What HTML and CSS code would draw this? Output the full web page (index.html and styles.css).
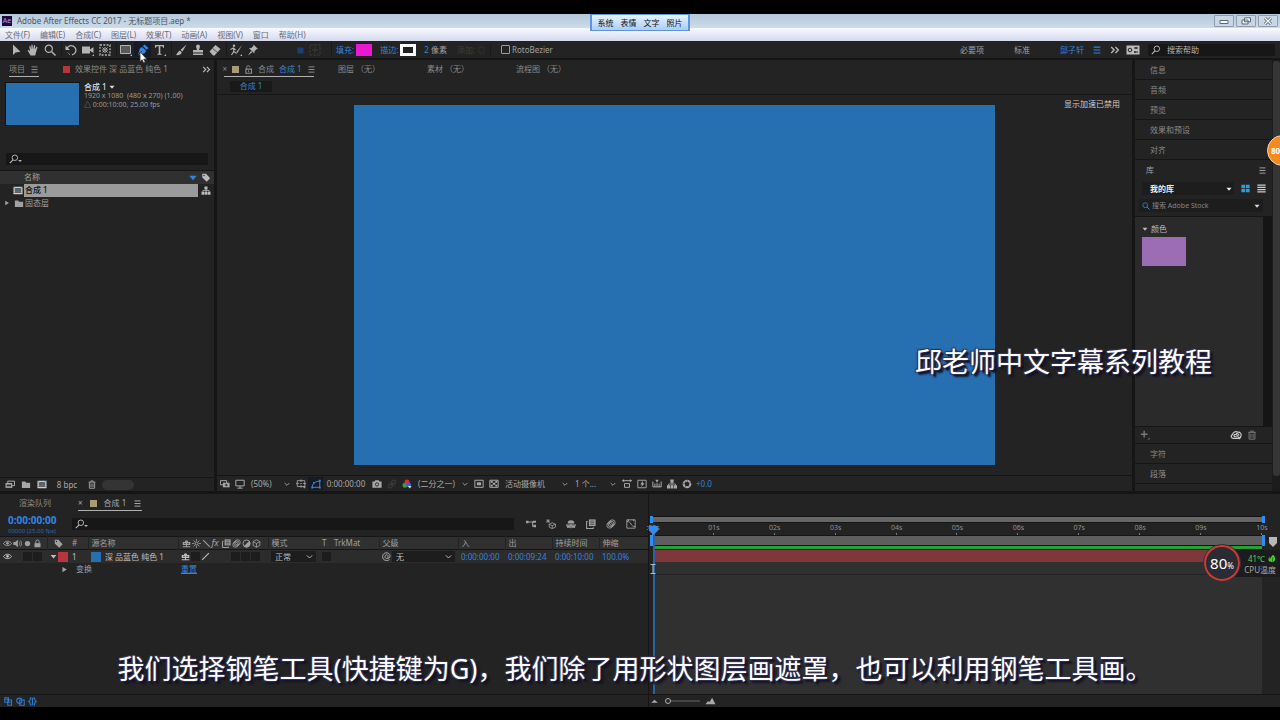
FILE: index.html
```html
<!DOCTYPE html>
<html lang="zh-CN">
<head>
<meta charset="utf-8">
<meta name="viewport" content="width=device-width, initial-scale=1">
<title>Adobe After Effects CC 2017 - 无标题项目.aep *</title>
<link rel="stylesheet" href="styles.css">
</head>
<body>
<svg class="defs" aria-hidden="true">
  <symbol id="arrow" viewBox="0 0 12 12"><path d="M3 0.5v10.5l2.6-2.6 4.9-.6z" fill="currentColor"/></symbol>
  <symbol id="hand" viewBox="0 0 12 12"><path d="M3.6 11.5 1 7.2C.3 6 1.4 5.5 2.1 6.3l1 1L2.3 2.6c-.1-.9 1-1.1 1.2-.2l.8 3 .1-4.3c0-.9 1.2-.9 1.2 0l.4 4.2 1-3.9c.2-.8 1.3-.6 1.2.3L7.700 5.800l1.5-2.700c.5-.8 1.500-.200 1.200.6L9 8.300l-.8 3.200z" fill="currentColor"/></symbol>
  <symbol id="zoom" viewBox="0 0 12 12"><circle cx="4.800" cy="4.800" r="3.600" fill="none" stroke="currentColor" stroke-width="1.200"/><path d="m7.500 7.500 4 4" stroke="currentColor" stroke-width="1.500"/></symbol>
  <symbol id="rotate" viewBox="0 0 12 12"><path d="M2 4.500A4.600 4.600 0 1 1 7 10.800" fill="none" stroke="currentColor" stroke-width="1.300"/><path d="M.5 1.500v4.500H5z" fill="currentColor"/><path d="M5 10.800 2 8" fill="none" stroke="currentColor" stroke-dasharray="1 1"/></symbol>
  <symbol id="camera" viewBox="0 0 12 12"><path d="M0 2.500h8v7H0zM8 5.500l3.500-2.500v6L8 6.800z" fill="currentColor"/><path d="M12 10v2h-2z" fill="currentColor"/></symbol>
  <symbol id="anchor" viewBox="0 0 12 12"><rect x="1" y="1" width="10" height="10" fill="none" stroke="currentColor" stroke-width="1.300" stroke-dasharray="2 1.300"/><path d="M6 3v6M3 6h6M3.500 3.500l1.500 1.500M8.500 3.500 7 5M3.500 8.500 5 7M8.500 8.500 7 7" stroke="currentColor"/></symbol>
  <symbol id="rect" viewBox="0 0 12 12"><path d="M.5 1.500h10v8H.5z" fill="#5a5a5a" stroke="currentColor"/><path d="M12 10v2h-2z" fill="currentColor"/></symbol>
  <symbol id="pen" viewBox="0 0 12 12"><path d="M7.500.5 11.500 4 9.800 5.800 5.800 2.200zM5 3l4 3.600c0 2.400-2.400 3.400-4.600 3.700L1.500 11.500 1 11l1-3.300C2.300 5.500 3 3.700 5 3z" fill="currentColor"/><path d="m1 11 4-4" stroke="#15233a" stroke-width=".8"/></symbol>
  <symbol id="type" viewBox="0 0 12 12"><path d="M1 1h9v2.800H9L8.500 2.300H6.300v7.200l1.300.5v.8H3.400V10l1.300-.5V2.300H2.500L2 3.800H1z" fill="currentColor"/><path d="M12 10v2h-2z" fill="currentColor"/></symbol>
  <symbol id="brush" viewBox="0 0 12 12"><path d="M11.500.5 7.500 7.500 5.500 6zM5 6.700l1.800 1.500C6.500 10.500 3.500 11.600.5 11c2-.7 2-3.800 4.500-4.300z" fill="currentColor"/></symbol>
  <symbol id="stamp" viewBox="0 0 12 12"><path d="M4 2.500a2 2 0 1 1 4 0L7 6h4v2.500H1V6h4zM1 9.500h10V11H1z" fill="currentColor"/></symbol>
  <symbol id="eraser" viewBox="0 0 12 12"><path d="m.5 7.500 6-6.500 5 4-6 6.500H4z" fill="currentColor"/><path d="m3.500 4.500 5 4" stroke="#232323" stroke-width=".7"/></symbol>
  <symbol id="roto" viewBox="0 0 12 12"><circle cx="4" cy="1.800" r="1.200" fill="currentColor"/><path d="M.5 5.500 3.500 4l2 2M3.700 4v3.500L1.500 11M3.700 7.500 6 9" fill="none" stroke="currentColor" stroke-width="1.100"/><path d="M12 1 8 8 6 10.500l.7-3z" fill="currentColor"/><path d="M12 10v2h-2z" fill="currentColor"/></symbol>
  <symbol id="pin" viewBox="0 0 12 12"><path d="m6.500.5 4.500 4.500-1.500.2-2 2-.1 2.300L2 4.200l2.300-.1 2-2zM4 7l-3 4.500 4.300-3.300z" fill="currentColor"/></symbol>
  <symbol id="box" viewBox="0 0 12 12"><path d="M3.500 3.500h6v6h-6z" fill="currentColor"/></symbol>
  <symbol id="boxes" viewBox="0 0 12 12"><path d="M1 1h10v10H1z" fill="none" stroke="currentColor" stroke-dasharray="3 1"/><path d="M6 3v6M3 6h6" stroke="currentColor"/></symbol>
  <symbol id="search" viewBox="0 0 12 12"><circle cx="7" cy="4.500" r="3.300" fill="none" stroke="currentColor" stroke-width="1.200"/><path d="M4.800 7 1 11" stroke="currentColor" stroke-width="1.400"/></symbol>
  <symbol id="menu" viewBox="0 0 12 12"><path d="M2 2.500h8M2 6h8M2 9.500h8" stroke="currentColor" stroke-width="1.300"/></symbol>
  <symbol id="more" viewBox="0 0 12 12"><path d="m1.500 2.500 3.500 3.500-3.500 3.500M6.500 2.500 10 6 6.500 9.500" fill="none" stroke="currentColor" stroke-width="1.600"/></symbol>
  <symbol id="card" viewBox="0 0 14 12"><path d="M.5 1.500h13v9H.5z" fill="currentColor"/><circle cx="4" cy="6" r="1.800" fill="none" stroke="#222"/><path d="M8 4h4M8 8h4M10 3v2M9 7v2" stroke="#222" stroke-width="1.200"/></symbol>
  <symbol id="lock" viewBox="0 0 12 12"><path d="M2 5.500h8V11H2z" fill="currentColor"/><path d="M3.800 5.500V3.500a2.200 2.200 0 0 1 4.400 0v2" fill="none" stroke="currentColor" stroke-width="1.300"/></symbol>
  <symbol id="unlock" viewBox="0 0 12 12"><path d="M2.500 5.500h7.500V11H2.500z" fill="none" stroke="currentColor" stroke-width="1.500"/><path d="M3.500 5.500v-2a2.200 2.200 0 0 1 4.400-.5M6.200 7v2.500" fill="none" stroke="currentColor" stroke-width="1.300"/></symbol>
  <symbol id="tri-d" viewBox="0 0 12 12"><path d="M1 3.500h10L6 9.500z" fill="currentColor"/></symbol>
  <symbol id="tri-r" viewBox="0 0 12 12"><path d="M2.500 1.500v9L10 6z" fill="currentColor"/></symbol>
  <symbol id="chev" viewBox="0 0 12 12"><path d="m2.500 4.500 3.500 3.500 3.500-3.500" fill="none" stroke="currentColor" stroke-width="1.300"/></symbol>
  <symbol id="tag" viewBox="0 0 12 12"><path d="M1 1h5l5.500 6L7 11.500 1 6z" fill="currentColor"/><circle cx="3.300" cy="3.300" r=".9" fill="#2c2c2c"/></symbol>
  <symbol id="comp" viewBox="0 0 12 10"><path d="M.5.5h11v9H.5z" fill="#cdcdcd"/><path d="M2.500 2h7v6h-7z" fill="#3d6a75"/><path d="m3 7.500 3-4 3 4z" fill="#a84f4f"/><path d="M1.300 1v8M10.700 1v8" stroke="#444" stroke-width=".9" stroke-dasharray="1 1"/></symbol>
  <symbol id="folder" viewBox="0 0 12 12"><path d="M.5 2h4.500l1 1.500h5.500V10.500H.5z" fill="currentColor"/></symbol>
  <symbol id="tree" viewBox="0 0 12 12"><path d="M4 .5h4v4H4zM0 7.500h3.600v4H0zM4.200 7.500h3.600v4H4.200zM8.400 7.500H12v4H8.400z" fill="currentColor"/><path d="M6 4v4M1.800 8V6h8.400v2" fill="none" stroke="currentColor"/></symbol>
  <symbol id="footage" viewBox="0 0 12 12"><path d="M3 1.500h9v6H3z" fill="none" stroke="currentColor" stroke-width="1.300"/><path d="M0 4h9v6.500H0z" fill="currentColor"/><path d="M1.500 6h6v2.500h-6z" fill="#333"/></symbol>
  <symbol id="trash" viewBox="0 0 12 12"><path d="M1.500 2.800h9M4.500 2.500V1.200h3v1.300M2.500 3v8h7V3M4.700 4.500v5M7.300 4.500v5" fill="none" stroke="currentColor" stroke-width="1.200"/></symbol>
  <symbol id="grid4" viewBox="0 0 12 12"><path d="M.5 1h5v4.500h-5zM6.500 1h5v4.500h-5zM.5 6.500h5V11h-5zM6.500 6.500h5V11h-5z" fill="currentColor"/></symbol>
  <symbol id="list" viewBox="0 0 12 12"><path d="M.5 1.500h11M.5 4.500h11M.5 7.500h11M.5 10.500h11" stroke="currentColor" stroke-width="1.800"/></symbol>
  <symbol id="plus" viewBox="0 0 12 12"><path d="M5 1v8M1 5h8" stroke="currentColor" stroke-width="1.700"/><path d="M11.500 9v2.500H9z" fill="currentColor"/></symbol>
  <symbol id="cloud" viewBox="0 0 14 12"><path d="M4 10C1 10 .3 6.500 2.800 5.600 3.300 2.600 6.500 1.200 9 2.600c3-.6 5 2.400 3.800 4.800C12.500 9.300 11 10 9.500 10z" fill="none" stroke="currentColor" stroke-width="1.400"/><path d="M8 8C5 8.500 3.800 7 4.800 5.800S8 5.500 9.500 8M7 4.500c2-.8 3.600.6 3.500 2.500M9 8l3 3" fill="none" stroke="currentColor" stroke-width="1.300"/></symbol>
  <symbol id="layers" viewBox="0 0 12 12"><path d="M.5 2h7.500v5H.5z" fill="none" stroke="currentColor" stroke-width="1.200"/><path d="M3.500 4.500h8V10h-8z" fill="currentColor"/><path d="M7.500 5.500v3.500M5.700 7.200h3.600" stroke="#222"/></symbol>
  <symbol id="monitor" viewBox="0 0 12 12"><path d="M1 1.500h10v6.800H1zM3 11h6M6 8.300V11" fill="none" stroke="currentColor" stroke-width="1.200"/></symbol>
  <symbol id="safe" viewBox="0 0 12 12"><path d="M1.500 2h9v7h-9zM6 .5v3M6 7.500v3M0 5.500h3.500M8.500 5.500H12M5 5.500h2" fill="none" stroke="currentColor"/><path d="M8 9h4l-2 2.500z" fill="currentColor"/></symbol>
  <symbol id="mask" viewBox="0 0 12 12"><path d="M1.500 10C1.500 6 4 3 10.500 2.500V10z" fill="none" stroke="currentColor" stroke-width="1.200"/><path d="M.3 9h2.400v2.400H.3zM9.300 9h2.400v2.400H9.300zM9.300 1h2.400v2.400H9.300zM2.500 3.500h2v2h-2z" fill="currentColor"/></symbol>
  <symbol id="snap" viewBox="0 0 12 12"><path d="M.5 3H3l1-1.500h4L9 3h2.500v7.500H.5z" fill="currentColor"/><circle cx="6" cy="6.500" r="2" fill="none" stroke="#222" stroke-width="1.100"/></symbol>
  <symbol id="link" viewBox="0 0 12 12"><path d="M5 4 7 1.500c2-1 4 1 3 3L7 8M7 8l-2 2.500c-2 1-4-1-3-3L5 4M4 7.500l4-3" fill="none" stroke="currentColor" stroke-width="1.300"/></symbol>
  <symbol id="rgb" viewBox="0 0 12 12"><circle cx="6" cy="3.600" r="3" fill="#e02a2a"/><circle cx="3.600" cy="7.600" r="3" fill="#2ba03c"/><circle cx="8" cy="7" r="2.900" fill="#345fe0"/><path d="M7 8.500h4.500L9.300 11.500z" fill="#ddd"/></symbol>
  <symbol id="roi" viewBox="0 0 12 12"><path d="M1 1.500h10v8.500H1z" fill="none" stroke="currentColor" stroke-width="1.200"/><path d="M3.500 4h5v3.500h-5z" fill="currentColor"/></symbol>
  <symbol id="alpha" viewBox="0 0 12 12"><path d="M1 1.500h10v8.500H1z" fill="none" stroke="currentColor" stroke-width="1.200"/><path d="M2 2.500h2.500v2H2zM7.500 2.500H10v2H7.500zM4.500 4.500h3v2.500h-3zM2 7h2.500v2H2zM7.500 7H10v2H7.500z" fill="currentColor"/></symbol>
  <symbol id="aspect" viewBox="0 0 12 12"><path d="M0 2h12M2 .5v3M10 .5v3M3 5.500h6V10H3z" fill="none" stroke="currentColor" stroke-width="1.200"/></symbol>
  <symbol id="fast" viewBox="0 0 12 12"><path d="M1 1.500h10v9H1z" fill="none" stroke="currentColor" stroke-width="1.100"/><path d="M7 2 4 6.500h2L5 10l4-5H7z" fill="currentColor"/></symbol>
  <symbol id="tline" viewBox="0 0 12 12"><path d="M1 3v6.500h10V3M3.500 5.500v4M6 5v4.500M8.500 5.500v4" fill="none" stroke="currentColor" stroke-width="1.200"/><path d="M4 1h4L6 4.500z" fill="currentColor"/></symbol>
  <symbol id="iris" viewBox="0 0 12 12"><circle cx="6" cy="6" r="4" fill="none" stroke="currentColor" stroke-width="2.400"/><path d="m6 .5 1 3M11 4 8 5.500M9.500 10 7.500 8M3.500 11l1-3M.8 5l3 1M3 1.500l1.500 2.500" stroke="#333" stroke-width=".6"/></symbol>
  <symbol id="flow" viewBox="0 0 12 12"><path d="M0 3.500h6M6 3.500h2v5h3" fill="none" stroke="currentColor" stroke-width="1.300"/><path d="M0 2h3v3H0zM8 2h4v2.500H8zM9 7h3v3H9z" fill="currentColor"/></symbol>
  <symbol id="cube" viewBox="0 0 12 12"><path d="M6 1l4.500 2.500v5L6 11 1.500 8.500v-5zM1.500 3.500 6 6l4.500-2.500M6 6v5" fill="none" stroke="currentColor" stroke-width="1.100"/></symbol>
  <symbol id="draft" viewBox="0 0 12 12"><path d="M7.500 4.500 11.300 6.300v3.500L7.500 11.500 3.800 9.800V6.300zM3.800 6.300 7.500 8l3.800-1.700M7.500 8v3.500" fill="none" stroke="currentColor"/><path d="M2.500 0v5M0 2.500h5M.8.8l3.500 3.500M4.200.8.800 4.200" stroke="currentColor" stroke-width=".9"/></symbol>
  <symbol id="shy" viewBox="0 0 12 12"><path d="M2 5.500a4 4 0 0 1 8 0zM0 6.500h12V8H0zM1 8.500h4v2H1zM7 8.500h4v2H7zM5.300 6h1.400v5H5.300z" fill="currentColor"/></symbol>
  <symbol id="shyman" viewBox="0 0 12 12"><path d="M4 3.500a2 2 0 0 1 4 0V4h3v4H1V4h3zM5.300 7h1.400v2.500H11V11H1V9.500h4.300z" fill="currentColor"/><path d="M3 6h2M7 6h2" stroke="#2a2a2a"/></symbol>
  <symbol id="blend" viewBox="0 0 12 12"><path d="M3.500.5h8v8h-8z" fill="currentColor"/><path d="M5 2.500h5M5 4.500h5M5 6.500h5" stroke="#333" stroke-width=".8"/><path d="M2 3H.7v8.300h8V10" fill="none" stroke="currentColor" stroke-width="1.300"/></symbol>
  <symbol id="blur" viewBox="0 0 12 12"><circle cx="7.500" cy="4.500" r="3.500" fill="none" stroke="currentColor" stroke-width="1.100"/><circle cx="6" cy="6" r="3.500" fill="none" stroke="currentColor" stroke-width="1.100"/><circle cx="4.500" cy="7.500" r="3.500" fill="none" stroke="currentColor" stroke-width="1.100"/></symbol>
  <symbol id="graph" viewBox="0 0 12 12"><path d="M1 1h10v10H1zM1 3c3 0 4 1 5 3s2 3 5 3M3 .5v2M9 .5v2" fill="none" stroke="currentColor" stroke-width="1.100"/></symbol>
  <symbol id="eye" viewBox="0 0 12 12"><path d="M.7 6C3 2 9 2 11.300 6 9 9.700 3 9.700.7 6z" fill="none" stroke="currentColor" stroke-width="1.300"/><circle cx="6" cy="5.800" r="1.900" fill="currentColor"/></symbol>
  <symbol id="speaker" viewBox="0 0 12 12"><path d="M.5 4H3l3.500-3v10L3 8H.5z" fill="currentColor"/><path d="M8 3.500c1.300 1.300 1.300 3.700 0 5M9.800 2c2.200 2 2.200 6 0 8" fill="none" stroke="currentColor" stroke-width="1.100"/></symbol>
  <symbol id="dot" viewBox="0 0 12 12"><circle cx="6" cy="6" r="3.500" fill="currentColor"/></symbol>
  <symbol id="sun" viewBox="0 0 12 12"><circle cx="6" cy="6" r="2" fill="none" stroke="currentColor" stroke-width="1.300"/><path d="M6 0v3M6 9v3M0 6h3M9 6h3M2 2l2 2M8 8l2 2M10 2 8 4M4 8l-2 2" stroke="currentColor"/></symbol>
  <symbol id="slash" viewBox="0 0 12 12"><path d="m1.500 1.500 9 9" stroke="currentColor" stroke-width="1.500"/></symbol>
  <symbol id="slash2" viewBox="0 0 12 12"><path d="m1.500 10.500 9-9" stroke="currentColor" stroke-width="1.500"/></symbol>
  <symbol id="half" viewBox="0 0 12 12"><circle cx="6" cy="6" r="4.700" fill="none" stroke="currentColor" stroke-width="1.200"/><path d="M9.500 2.500a4.900 4.900 0 1 1-7 7z" fill="currentColor"/></symbol>
  <symbol id="whip" viewBox="0 0 12 12"><path d="M8.500 8c-2 2-5 .5-4.500-2.300S8.500 3 8 6s.8 2.500 2 1.500 1-4-1-5.500-6-1.300-7.500 1.500S1 10 4 11s5 0 6-1" fill="none" stroke="currentColor" stroke-width="1.100"/></symbol>
  <symbol id="toggle1" viewBox="0 0 12 12"><path d="M1 1h5v6H1zM5 4h5v7H5zM2 3h3M7 7h2" fill="none" stroke="currentColor" stroke-width="1.400"/></symbol>
  <symbol id="toggle2" viewBox="0 0 12 12"><circle cx="4.500" cy="5" r="3.500" fill="none" stroke="currentColor" stroke-width="1.400"/><path d="M5 4h6v7H5z" fill="none" stroke="currentColor" stroke-width="1.400"/></symbol>
  <symbol id="toggle3" viewBox="0 0 12 12"><path d="M4.500 1C2 1 4 5 1 6c3 1 1 5 3.500 5M7.500 1C10 1 8 5 11 6c-3 1-1 5-3.500 5M6 1v10" fill="none" stroke="currentColor" stroke-width="1.700"/></symbol>
  <symbol id="hill" viewBox="0 0 12 12"><path d="M2 8 6 4.500 10 8z" fill="currentColor"/></symbol>
  <symbol id="hills" viewBox="0 0 12 12"><path d="m0 10 3-4 1.500 1.500L8 2l4 8z" fill="currentColor"/></symbol>
  <symbol id="leaf" viewBox="0 0 12 12"><path d="M7.500.5c4.500 4 4.500 10-1 11-6-1-4-6 1-11zM2.500 3c-3 4-2 7 1 8-.8-3-1-5-1-8z" fill="currentColor"/><path d="M7.500 4 6.500 11" stroke="#1d4a20"/></symbol>
</svg>

<div class="app">
  <header class="titlebar">
    <span class="logo">Ae</span>
    <h1 class="title">Adobe After Effects CC 2017 - 无标题项目.aep *</h1>
    <div class="winbtns">
      <button aria-label="最小化"><svg viewBox="0 0 12 8"><path d="M2 3.500h8v3H2z" fill="#fff" stroke="#5d6875"/></svg></button>
      <button aria-label="还原"><svg viewBox="0 0 12 8"><path d="M4.500.8h6v4h-6zM2 3h6v4H2z" fill="#fff" stroke="#5d6875"/></svg></button>
      <button aria-label="关闭"><svg viewBox="0 0 12 8"><path d="m3 1 6 6M9 1 3 7" stroke="#5d6875" stroke-width="3"/><path d="m3 1 6 6M9 1 3 7" stroke="#fff" stroke-width="1.200"/></svg></button>
    </div>
    <nav class="float-menu"><a href="#">系统</a><a href="#">表情</a><a href="#">文字</a><a href="#">照片</a></nav>
  </header>
  <nav class="menubar">
    <button>文件(F)</button><button>编辑(E)</button><button>合成(C)</button><button>图层(L)</button><button>效果(T)</button><button>动画(A)</button><button>视图(V)</button><button>窗口</button><button>帮助(H)</button>
  </nav>

  <div class="toolbar">
    <div class="tools"><button aria-label="选取"><svg><use href="#arrow"/></svg></button><button aria-label="手形"><svg><use href="#hand"/></svg></button><button aria-label="缩放"><svg><use href="#zoom"/></svg></button></div>
    <div class="tools"><button aria-label="旋转"><svg><use href="#rotate"/></svg></button><button aria-label="摄像机"><svg><use href="#camera"/></svg></button><button aria-label="锚点"><svg><use href="#anchor"/></svg></button></div>
    <div class="tools"><button aria-label="矩形"><svg><use href="#rect"/></svg></button><button aria-label="钢笔" class="active"><svg><use href="#pen"/></svg></button><button aria-label="文字"><svg><use href="#type"/></svg></button></div>
    <div class="tools"><button aria-label="画笔"><svg><use href="#brush"/></svg></button><button aria-label="仿制图章"><svg><use href="#stamp"/></svg></button><button aria-label="橡皮擦"><svg><use href="#eraser"/></svg></button></div>
    <div class="tools pair"><button aria-label="Roto 笔刷"><svg><use href="#roto"/></svg></button><button aria-label="操控点"><svg><use href="#pin"/></svg></button></div>
    <div class="tools dim"><button aria-label="星形" class="navy"><svg><use href="#box"/></svg></button><button aria-label="工具"><svg><use href="#boxes"/></svg></button></div>
    <div class="paint">
      <span class="blue">填充:</span><button class="fill" aria-label="填充颜色"></button>
      <span class="blue stroke-label">描边:</span><button class="stroke" aria-label="描边颜色"></button>
      <span class="px"><b class="blue">2</b> 像素</span>
      <span class="add">添加: ◎</span>
      <label class="roto"><input type="checkbox">RotoBezier</label>
    </div>
    <div class="spaces">
      <button>必要项</button><button>标准</button><button class="blue">邱子轩</button>
      <button class="blue sm" aria-label="菜单"><svg><use href="#menu"/></svg></button>
      <button class="sm" aria-label="更多"><svg><use href="#more"/></svg></button>
      <button class="sm" aria-label="同步"><svg><use href="#card"/></svg></button>
    </div>
    <label class="field help"><svg><use href="#search"/></svg><input type="text" placeholder="搜索帮助" aria-label="搜索帮助"></label>
  </div>

  <main class="work">
    <section class="panel project">
      <div class="tabs">
        <button class="tab on">项目<svg><use href="#menu"/></svg></button>
        <button class="tab"><i class="chip red"></i>效果控件 深 品蓝色 纯色 1</button>
        <button class="tab end" aria-label="更多"><svg><use href="#more"/></svg></button>
      </div>
      <div class="info">
        <div class="thumb"></div>
        <div class="meta"><strong>合成 1<svg><use href="#tri-d"/></svg></strong><span>1920 x 1080 &nbsp;(480 x 270) (1.00)</span><span>△ 0:00:10:00, 25.00 fps</span></div>
      </div>
      <label class="field find"><svg><use href="#search"/></svg><i class="caret"></i><input type="text" aria-label="搜索项目"></label>
      <table class="files">
        <colgroup><col class="f1"><col><col class="f3"></colgroup>
        <thead><tr><th></th><th><span class="spread">名称<svg class="blue"><use href="#tri-d"/></svg></span></th><th><svg><use href="#tag"/></svg></th></tr></thead>
        <tbody>
          <tr class="sel"><td><svg><use href="#comp"/></svg></td><td>合成 1</td><td><svg><use href="#tree"/></svg></td></tr>
          <tr><td><span class="spread"><svg class="tiny"><use href="#tri-r"/></svg><svg><use href="#folder"/></svg></span></td><td>固态层</td><td></td></tr>
        </tbody>
      </table>
      <footer class="pfoot"><button aria-label="解释素材"><svg><use href="#footage"/></svg></button><button aria-label="新建文件夹"><svg><use href="#folder"/></svg></button><button aria-label="新建合成"><svg><use href="#comp"/></svg></button><button class="bpc">8 bpc</button><button aria-label="删除"><svg><use href="#trash"/></svg></button><span class="hscroll"></span></footer>
    </section>

    <section class="panel viewer">
      <div class="tabs">
        <button class="tab on comp"><small>×</small><i class="chip tan"></i><svg><use href="#unlock"/></svg>合成 <span class="blue">合成 1</span><svg><use href="#menu"/></svg></button>
        <button class="tab wide">图层 （无）</button><button class="tab wide">素材 （无）</button><button class="tab wide">流程图 （无）</button>
      </div>
      <div class="crumbs"><button class="blue">合成 1</button></div>
      <div class="stage"><div class="canvas"></div><span class="notice">显示加速已禁用</span></div>
      <footer class="vfoot">
        <button class="c" aria-label="始终预览"><svg><use href="#layers"/></svg></button><button class="c" aria-label="主查看器"><svg><use href="#monitor"/></svg></button>
        <label class="pick p46"><select aria-label="放大率"><option>(50%)</option></select><svg><use href="#chev"/></svg></label>
        <button class="c" aria-label="网格"><svg><use href="#safe"/></svg></button><button class="c on" aria-label="蒙版"><svg><use href="#mask"/></svg></button>
        <button class="tc">0:00:00:00</button>
        <button class="c" aria-label="快照"><svg><use href="#snap"/></svg></button><button class="c off" aria-label="显示快照"><svg><use href="#link"/></svg></button><button class="c" aria-label="通道"><svg><use href="#rgb"/></svg></button>
        <label class="pick p57"><select aria-label="分辨率"><option>(二分之一)</option></select><svg><use href="#chev"/></svg></label>
        <button class="c" aria-label="目标区域"><svg><use href="#roi"/></svg></button><button class="c" aria-label="透明网格"><svg><use href="#alpha"/></svg></button>
        <label class="pick p70"><select aria-label="视图"><option>活动摄像机</option></select><svg><use href="#chev"/></svg></label>
        <label class="pick p48"><select aria-label="视图布局"><option>1 个...</option></select><svg><use href="#chev"/></svg></label>
        <button class="c" aria-label="像素长宽比"><svg><use href="#aspect"/></svg></button><button class="c" aria-label="快速预览"><svg><use href="#fast"/></svg></button><button class="c" aria-label="时间轴"><svg><use href="#tline"/></svg></button><button class="c" aria-label="流程图"><svg><use href="#tree"/></svg></button><button class="c" aria-label="重置曝光"><svg><use href="#iris"/></svg></button><span class="blue exposure">+0.0</span>
      </footer>
    </section>

    <aside class="panel side">
      <div class="stack">
        <button class="fold">信息</button><button class="fold">音频</button><button class="fold">预览</button><button class="fold">效果和预设</button><button class="fold">对齐</button>
        <div class="lib-head">库<svg><use href="#menu"/></svg></div>
        <div class="lib-row"><label class="pick mine"><select aria-label="库"><option>我的库</option></select><svg><use href="#tri-d"/></svg></label><button class="cyan" aria-label="网格视图"><svg><use href="#grid4"/></svg></button><button aria-label="列表视图"><svg><use href="#list"/></svg></button></div>
        <label class="field stock"><svg class="blue"><use href="#zoom"/></svg><input type="text" placeholder="搜索 Adobe Stock" aria-label="搜索 Adobe Stock"><svg class="tiny"><use href="#tri-d"/></svg></label>
        <div class="lib-body"><div class="lib-list"><h2><svg><use href="#tri-d"/></svg>颜色</h2><div class="swatch"></div></div></div>
        <div class="lib-foot"><button aria-label="添加"><svg><use href="#plus"/></svg></button><button class="push" aria-label="云"><svg><use href="#cloud"/></svg></button><button aria-label="删除"><svg><use href="#trash"/></svg></button></div>
        <button class="fold">字符</button><button class="fold">段落</button><button class="fold">跟踪器</button>
      </div>
      <div class="vscroll"><span></span></div>
    </aside>
  </main>

  <section class="timeline">
    <div class="layers">
      <div class="tabs">
        <button class="tab queue">渲染队列</button>
        <button class="tab on tcomp"><small>×</small><i class="chip tan"></i>合成 1<svg><use href="#menu"/></svg></button>
      </div>
      <div class="tbar">
        <div class="clock"><strong>0:00:00:00</strong><small>00000 (25.00 fps)</small></div>
        <label class="field grow"><svg><use href="#search"/></svg><i class="caret"></i><input type="text" aria-label="搜索图层"></label>
        <div class="switches"><button aria-label="微型流程图"><svg><use href="#flow"/></svg></button><button aria-label="草图 3D"><svg><use href="#draft"/></svg></button><button aria-label="消隐"><svg><use href="#shy"/></svg></button><button aria-label="帧混合"><svg><use href="#blend"/></svg></button><button aria-label="运动模糊"><svg><use href="#blur"/></svg></button><button aria-label="图表编辑器"><svg><use href="#graph"/></svg></button></div>
      </div>
      <table class="rows">
        <colgroup><col class="w-av"><col class="w-tag"><col class="w-no"><col><col class="w-sw"><col class="w-mode"><col class="w-t"><col class="w-trk"><col class="w-par"><col class="w-n"><col class="w-n"><col class="w-n"><col class="w-last"></colgroup>
        <thead><tr>
          <th><span class="ic"><svg><use href="#eye"/></svg><svg><use href="#speaker"/></svg><svg><use href="#dot"/></svg><svg><use href="#lock"/></svg></span></th>
          <th class="bar mid"><svg><use href="#tag"/></svg></th><th>#</th><th class="bar">源名称</th>
          <th class="bar"><span class="ic"><svg><use href="#shyman"/></svg><svg><use href="#sun"/></svg><svg><use href="#slash"/></svg><em>fx</em><svg><use href="#blend"/></svg><svg><use href="#blur"/></svg><svg><use href="#half"/></svg><svg><use href="#cube"/></svg></span></th>
          <th class="bar">模式</th><th>T</th><th>TrkMat</th><th class="bar">父级</th><th class="bar">入</th><th class="bar">出</th><th class="bar">持续时间</th><th class="bar">伸缩</th>
        </tr></thead>
        <tbody>
          <tr class="layer">
            <td><span class="ic"><svg><use href="#eye"/></svg><i></i><b></b><b></b></span></td>
            <td><span class="ic"><svg class="tiny"><use href="#tri-d"/></svg><i class="chip big red"></i></span></td>
            <td>1</td>
            <td><span class="name"><i class="chip big navyblue"></i>深 品蓝色 纯色 1</span></td>
            <td><span class="ic"><svg><use href="#shyman"/></svg><b></b><svg><use href="#slash2"/></svg><i></i><i></i><b></b><b></b><b></b></span></td>
            <td><label class="pick"><select aria-label="模式"><option>正常</option></select><svg><use href="#chev"/></svg></label></td>
            <td><span class="ic"><b></b></span></td><td></td>
            <td><span class="ic"><svg><use href="#whip"/></svg><label class="pick"><select aria-label="父级"><option>无</option></select><svg><use href="#chev"/></svg></label></span></td>
            <td class="num">0:00:00:00</td><td class="num">0:00:09:24</td><td class="num">0:00:10:00</td><td class="num">100.0%</td>
          </tr>
          <tr><td></td><td class="twist"><svg class="tiny"><use href="#tri-r"/></svg></td><td colspan="2" class="prop">变换</td><td><a href="#" class="reset">重置</a></td><td colspan="8"></td></tr>
        </tbody>
      </table>
      <footer class="tfoot"><button aria-label="图层开关"><svg><use href="#toggle1"/></svg></button><button aria-label="转换控制"><svg><use href="#toggle2"/></svg></button><button aria-label="入点出点"><svg><use href="#toggle3"/></svg></button></footer>
    </div>

    <div class="time">
      <div class="track">
        <div class="nav"></div>
        <div class="ruler"><span>:00s</span><span>01s</span><span>02s</span><span>03s</span><span>04s</span><span>05s</span><span>06s</span><span>07s</span><span>08s</span><span>09s</span><span>10s</span></div>
        <div class="area"></div>
        <div class="cache"></div>
        <div class="clip"></div>
        <div class="lane"></div>
        <div class="head"><svg class="knob" viewBox="0 0 10 10"><path d="M0 0h10v5L5 10 0 5z" fill="#2f8cf0"/></svg></div>
        <svg class="ibeam" viewBox="0 0 6 10"><path d="M.5.5h5M.5 9.500h5M3 .5v9" stroke="#a9c0d4" fill="none"/></svg>
        <svg class="marker" viewBox="0 0 8 10"><path d="M0 0h8v6L4 10 0 6z" fill="#b8b8b8"/></svg>
      </div>
      <footer class="tfoot zoomer"><svg><use href="#hill"/></svg><input type="range" min="0" max="100" value="0" aria-label="缩放时间轴"><svg><use href="#hills"/></svg></footer>
    </div>
  </section>

  <p class="caption mark">邱老师中文字幕系列教程</p>
  <p class="caption sub">我们选择钢笔工具(快捷键为G)，我们除了用形状图层画遮罩，也可以利用钢笔工具画。</p>
  <div class="ball">80</div>
  <div class="cpu"><div class="temp"><span>41℃ <svg><use href="#leaf"/></svg></span><span class="lbl">CPU温度</span></div><div class="dial">80<small>%</small></div></div>
  <svg class="cursor" viewBox="0 0 8 12"><path d="M.8.8v9l2-1.800 1.300 3 1.500-.7L4.300 7.500H7z" fill="#fff" stroke="#333" stroke-width=".7"/></svg>
</div>
</body>
</html>
```
FILE: styles.css
```css
* { box-sizing: border-box; }

body {
  margin: 0;
  background: #000;
  color: #a0a0a0;
  font: 8px/12px "Noto Sans", "Noto Sans CJK SC", sans-serif;
}

button, input, select {
  margin: 0;
  padding: 0;
  border: 0;
  background: none;
  color: inherit;
  font: inherit;
}

button { display: inline-flex; align-items: center; justify-content: center; white-space: nowrap; }
a { color: inherit; text-decoration: none; }
h1, h2, p { margin: 0; font: inherit; }
svg { display: block; width: 10px; height: 10px; flex: none; }
svg.tiny { width: 7px; height: 7px; }
.defs { position: absolute; width: 0; height: 0; }
.blue { color: #3483d8; }

.app {
  position: relative;
  display: flex;
  flex-direction: column;
  min-height: 100vh;
  padding: 14px 0;
  overflow: hidden;
}

/* window frame */
.titlebar {
  position: relative;
  display: flex;
  align-items: center;
  gap: 5px;
  height: 14px;
  background: linear-gradient(#b5c7d9, #cbdcec);
  color: #4d565f;
}
.logo {
  width: 10px;
  height: 10px;
  margin-left: 2px;
  background: #1f0a3f;
  color: #b79ae6;
  font-size: 7px;
  line-height: 10px;
  text-align: center;
}
.winbtns { display: flex; gap: 2px; margin-left: auto; padding-right: 2px; }
.winbtns button { width: 20px; height: 12px; border: 1px solid #8f9dac; border-radius: 1px; background: #c8d6e5; }
.winbtns svg { width: 12px; height: 8px; }
.float-menu {
  position: absolute;
  top: 0;
  left: 50%;
  display: flex;
  justify-content: center;
  gap: 7px;
  width: 100px;
  height: 17px;
  margin-left: -50px;
  border: 2px solid #5d94dc;
  border-width: 1px 2px;
  background: linear-gradient(#e9f3ff, #a9cdfb);
  color: #111;
  line-height: 15px;
}
.menubar {
  display: flex;
  gap: 10px;
  height: 13px;
  padding-left: 5px;
  background: linear-gradient(#f8faff, #d5d9ec);
  color: #6b6b75;
}

/* tool strip */
.toolbar {
  display: flex;
  align-items: center;
  height: 19px;
  padding-left: 7px;
  border-bottom: 2px solid #151515;
  background: #232323;
}
.tools { display: flex; width: 55px; border-right: 1px solid #1a1a1a; }
.tools button { width: 17px; height: 15px; color: #b4b4b4; }
.tools svg { width: 12px; height: 12px; }
.tools .active { background: #151b24; color: #2f86e6; }
.tools.pair { width: 65px; border: 0; }
.tools.dim { width: 40px; }
.tools.dim button { width: 15px; color: #3c3c3c; }
.tools.dim .navy { color: #1c3f78; }
.paint { display: flex; align-items: center; gap: 2px; padding-left: 4px; }
.fill, .stroke { width: 16px; height: 12px; }
.fill { background: #ea18d2; }
.stroke { border: 3px solid #fff; background: #222; }
.stroke-label { margin-left: 6px; }
.px { padding-left: 6px; }
.px b { font-weight: 400; }
.add { width: 42px; padding-left: 8px; color: #3d3d3d; white-space: nowrap; border-right: 1px solid #1a1a1a; }
.roto { display: flex; align-items: center; gap: 2px; padding-left: 8px; }
.roto input { appearance: none; width: 9px; height: 9px; border: 1px solid #9a9a9a; border-radius: 1px; }
.spaces { display: flex; align-items: center; margin-left: auto; gap: 30px; }
.spaces .sm { width: 14px; margin-left: -24px; }
.spaces .sm + .sm { margin-left: -26px; }
.spaces .sm:not(.blue) { color: #bbb; }
.spaces .sm:last-child svg { width: 14px; height: 12px; }
.field { display: flex; align-items: center; gap: 2px; height: 12px; padding: 0 3px; background: #171717; color: #b4b4b4; }
.field input { flex: 1; min-width: 0; width: 0; outline: 0; }
.field input::placeholder { color: inherit; opacity: 1; }
.caret { border: 2px solid transparent; border-top-color: #b4b4b4; border-bottom: 0; margin: 4px 0 0 -3px; }
.help { width: 127px; margin: 0 5px 0 8px; gap: 6px; }

/* panels */
.work { display: flex; flex: 1; gap: 3px; background: #151515; }
.panel { display: flex; flex-direction: column; background: #232323; }
.tabs { display: flex; height: 18px; }
.tab { position: relative; gap: 5px; color: #8a8a8a; }
.tab svg { width: 9px; height: 9px; }
.tab small { font-size: 8px; }
.tab.on::after { content: ""; position: absolute; left: 0; right: 0; bottom: 1px; height: 1px; background: #b0b0b0; }
.chip { width: 7px; height: 7px; flex: none; }
.chip.big { width: 10px; height: 10px; }
.red { background: #b8363a; }
.tan { background: #a99a78; }
.navyblue { background: #2670b2; }

.project { width: 214px; }
.project .tabs { padding: 0 3px 0 9px; gap: 24px; }
.project .tab.end { margin-left: auto; color: #b4b4b4; }
.info { display: flex; gap: 4px; padding: 4px 5px 0; }
.thumb { width: 75px; height: 44px; border: 1px solid #141414; background: #2670b2; }
.meta { display: flex; flex-direction: column; color: #999; white-space: nowrap; }
.meta strong { display: flex; align-items: center; gap: 2px; line-height: 9px; color: #ddd; font-weight: 500; }
.meta strong svg { width: 6px; height: 6px; }
.meta span { line-height: 9px; font-size: 7px; }
.find { margin: 27px 6px 5px; }
.files, .rows { border-collapse: collapse; table-layout: fixed; width: 100%; white-space: nowrap; }
td, th { height: 13px; padding: 0; font-weight: 400; text-align: left; line-height: 12px; }
thead tr { background: #303030; }
.files .f1 { width: 24px; }
.files .f3 { width: 16px; }
.files td:first-child { padding-left: 4px; }
.files td:nth-child(2) { padding-left: 1px; }
.files td:first-child > svg { margin-left: 9px; }
.files td:last-child, .files th:last-child { padding-left: 3px; color: #bbb; }
.files svg { width: 10px; height: 9px; }
.files svg.tiny { width: 6px; height: 6px; }
.spread { display: flex; align-items: center; justify-content: space-between; }
.files thead { border-top: 1px solid #151515; }
.sel td { background: #9b9b9b; color: #111; font-weight: 500; }
.sel td:first-child, .sel td:last-child { background: none; }
.pfoot, .vfoot, .tfoot, .lib-foot { display: flex; align-items: center; color: #a8a8a8; }
.pfoot { height: 14px; margin-top: auto; padding-left: 2px; border-top: 1px solid #151515; }
.pfoot button { width: 16px; }
.pfoot .bpc { width: 34px; }
.pfoot svg { height: 9px; }
.hscroll { width: 32px; height: 10px; margin-left: 2px; border-radius: 5px; background: #343434; }

.viewer { flex: 1; min-width: 0; }
.viewer .tabs { padding-left: 7px; }
.tab.comp { gap: 5px; width: 90px; margin-right: 24px; }
.tab.wide { width: 89px; justify-content: flex-start; gap: 0; }
.crumbs { display: flex; align-items: center; height: 17px; padding-left: 13px; border-bottom: 1px solid #171717; }
.crumbs button { width: 42px; height: 11px; background: #191919; }
.stage { position: relative; flex: 1; display: flex; justify-content: center; align-items: flex-start; padding: 10px 0; }
.canvas { width: 70%; aspect-ratio: 16 / 9; background: #2670b2; }
.notice { position: absolute; top: 3px; right: 12px; color: #ccc; }
.vfoot { height: 16px; border-top: 1px solid #151515; }
.vfoot .c { width: 15px; height: 13px; }
.vfoot .on { background: #151b24; color: #3483d8; }
.vfoot .off { color: #3c3c3c; }
.exposure { padding-left: 2px; }
.tc { width: 46px; }
.pick { display: flex; align-items: center; padding: 0 2px 0 4px; }
.pick select { appearance: none; flex: 1; min-width: 0; width: 0; outline: 0; }
.pick svg { width: 8px; height: 8px; }
.p46 { width: 46px; }
.p57 { width: 57px; }
.p70 { width: 70px; }
.p48 { width: 48px; }

.side { flex-direction: row; width: 145px; }
.stack { flex: 1; min-width: 0; height: 430px; overflow: hidden; display: flex; flex-direction: column; }
.fold { flex: 0 0 20px; justify-content: flex-start; padding-left: 15px; border-bottom: 1px solid #161616; color: #8a8a8a; }
.lib-head { flex: 0 0 20px; display: flex; align-items: center; justify-content: space-between; padding: 0 5px 0 11px; }
.lib-head svg { width: 9px; height: 9px; }
.lib-row { flex: none; display: flex; align-items: center; gap: 7px; padding: 2px 6px 2px 7px; }
.mine { flex: 1; height: 13px; padding-left: 8px; background: #1d1d1d; color: #eee; font-weight: 700; }
.mine svg { width: 6px; height: 6px; }
.lib-row button svg { width: 9px; height: 9px; }
.lib-row button { color: #ccc; }
.lib-row .cyan { color: #2a9fd8; }
.stock { flex: 0 0 13px; margin: 2px 9px 4px 4px; color: #858585; background: #1d1d1d; font-size: 7px; }
.stock svg { width: 8px; height: 8px; }
.stock .tiny { width: 6px; height: 6px; color: #ddd; }
.lib-body { flex: 0 0 210px; display: flex; padding-right: 9px; border-top: 1px solid #161616; background: #151515; }
.lib-list { flex: 1; padding: 6px 7px; background: #2a2a2a; }
.lib-list h2 { display: flex; align-items: center; gap: 3px; color: #bbb; }
.lib-list h2 svg { width: 6px; height: 6px; }
.swatch { width: 44px; height: 29px; margin-top: 2px; background: #9c6db4; }
.lib-foot { flex: 0 0 18px; padding: 0 15px 0 5px; border-bottom: 1px solid #161616; border-top: 1px solid #161616; gap: 5px; }
.lib-foot .push { margin-left: auto; color: #ccc; }
.lib-foot .push svg { width: 12px; }
.lib-foot button { color: #777; }
.vscroll { width: 8px; padding: 1px 0 0 1px; background: #1c1c1c; }
.vscroll span { display: block; height: 415px; border-radius: 3px; background: #353535; }

/* timeline */
.timeline { display: flex; height: 216px; border-top: 3px solid #151515; background: #232323; }
.layers { display: flex; flex-direction: column; width: 649px; border-right: 1px solid #151515; }
.layers .tabs { flex: none; height: 18px; padding-left: 19px; gap: 27px; }
.tcomp { gap: 7px; color: #aaa; }
.tbar { display: flex; align-items: center; height: 24px; padding-left: 8px; }
.clock { width: 64px; color: #2f86e6; white-space: nowrap; }
.clock strong { display: block; font-size: 10px; line-height: 14px; }
.clock small { display: block; font-size: 6px; line-height: 8px; color: #2a66ae; }
.grow { flex: 1; }
.switches { display: flex; gap: 10px; padding: 0 12px; }
.rows svg { width: 9px; height: 9px; }
.rows svg.tiny { width: 7px; height: 7px; }
.rows thead { border-top: 1px solid #151515; border-bottom: 1px solid #151515; }
.rows .w-av { width: 47px; }
.rows .w-tag { width: 22px; }
.rows .w-no { width: 19px; }
.rows .w-sw { width: 90px; }
.rows .w-mode { width: 51px; }
.rows .w-t { width: 12px; }
.rows .w-trk { width: 48px; }
.rows .w-par { width: 79px; }
.rows .w-n { width: 47px; }
.rows .w-last { width: 49px; }
.rows th, .rows td { padding-left: 3px; }
.rows .bar { border-left: 1px solid #232323; }
.rows .mid { padding-left: 6px; }
.ic { display: flex; align-items: center; gap: 1px; }
.ic > i:not(.chip), .ic > b, .ic > em { width: 9px; height: 9px; flex: none; }
.ic > b { background: #1d1d1d; }
.ic > em { font-size: 9px; line-height: 8px; }
.ic .pick { flex: 1; }
.rows .pick { height: 11px; margin-right: 3px; background: #1d1d1d; color: #bbb; }
.layer { background: #2c2c2c; color: #c0c0c0; }
.name { display: flex; align-items: center; gap: 4px; }
.num { color: #3483d8; }
.rows .twist { padding-left: 14px; }
.rows .prop { padding-left: 7px; }
.reset { color: #3483d8; text-decoration: underline; }
.tfoot { height: 13px; margin-top: auto; padding-left: 4px; gap: 3px; border-top: 1px solid #151515; }
.tfoot button { color: #2b7bd0; }
.tfoot svg { width: 9px; height: 9px; }
.time { flex: 1; min-width: 0; display: flex; flex-direction: column; background: #232323; }
.track { position: relative; flex: 1; display: flex; flex-direction: column; margin: 22px 18px 0 4px; background: linear-gradient(#232323 32px, #303030 32px); }
.nav, .area { border: 1px solid #151515; border-width: 1px 0; background: #666; box-shadow: -3px 0 #2f8cf0, 3px 0 #2f8cf0; }
.nav { height: 7px; }
.area { height: 11px; background: #5e5e5e; }
.ruler { display: flex; justify-content: space-between; height: 12px; font-size: 7px; line-height: 10px; color: #909090; }
.ruler span { display: flex; justify-content: center; width: 0; }
.ruler span::after { content: ""; width: 1px; height: 2px; margin: 10px 0 0 -1px; background: #777; position: absolute; }
.cache { height: 3px; background: #25a035; }
.clip { height: 13px; border-top: 1px solid #151515; background: #7e383c; }
.lane { height: 13px; border-bottom: 1px solid #242424; }
.head { position: absolute; top: 10px; bottom: 0; left: 0; width: 2px; background: #2c62a0; }
.knob { position: absolute; top: 0; left: -4px; width: 9px; height: 9px; }
.ibeam { position: absolute; top: 48px; left: -3px; width: 6px; height: 10px; }
.marker { position: absolute; top: 21px; right: -15px; width: 8px; height: 10px; }
.zoomer { padding-left: 0; margin-top: 0; gap: 5px; }
.zoomer input { appearance: none; width: 35px; height: 2px; background: #444; }
.zoomer input::-webkit-slider-thumb { appearance: none; width: 6px; height: 6px; border: 1px solid #b0b0b0; border-radius: 50%; background: #232323; }
.zoomer svg { width: 11px; height: 10px; }

/* overlays */
.caption {
  position: absolute;
  color: #fff;
  font-size: 27px;
  line-height: 36px;
  white-space: nowrap;
  text-shadow: -1px -1px 1px #33334f, 1px -1px 1px #33334f, -1px 1px 1px #33334f, 2px 2px 1px #14142a, 3px 3px 2px #14142a;
}
.mark { top: 344px; right: 68px; }
.sub { top: 651px; left: 0; right: 0; padding-right: 10px; text-align: center; }
.ball {
  position: absolute;
  top: 135px;
  right: -18px;
  width: 31px;
  height: 31px;
  padding-left: 3px;
  border: 1px solid #f3d3b0;
  border-radius: 50%;
  background: #f58a1f;
  color: #fff;
  font-weight: 700;
  line-height: 29px;
}
.cpu { position: absolute; top: 545px; right: 0; display: flex; flex-direction: row-reverse; align-items: center; }
.temp { display: flex; flex-direction: column; width: 56px; margin-left: -16px; padding: 3px 4px 2px 0; align-items: flex-end; background: #1b1b20; color: #4fd45a; line-height: 11px; }
.temp span { display: flex; align-items: center; gap: 3px; }
.temp svg { width: 8px; height: 9px; color: #3fd82a; }
.temp .lbl { color: #a8a8a8; }
.dial {
  z-index: 1;
  width: 36px;
  height: 36px;
  border: 2px solid #d03a30;
  border-radius: 50%;
  outline: 1px solid #33333a;
  background: #2b2b34;
  color: #fff;
  font: 15px/32px "Noto Sans", sans-serif;
  text-align: center;
}
.dial small { font-size: 8px; }
.cursor { position: absolute; top: 51px; left: 139px; width: 9px; height: 13px; }
```
